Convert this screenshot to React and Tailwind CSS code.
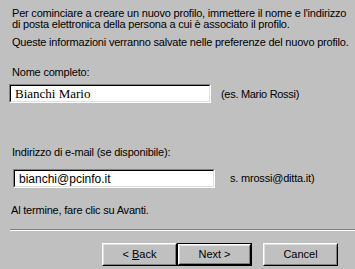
import React from "react";

function Sunken({ className, children }) {
  return (
    <div className={"border border-t-[#808080] border-l-[#808080] border-b-white border-r-white " + className}>
      <div className="h-full border border-t-black border-l-black border-b-[#dfdfdf] border-r-[#dfdfdf] bg-white flex items-center pl-[4px]">
        {children}
      </div>
    </div>
  );
}

function Button({ children, isDefault }) {
  const inner = (
    <div className="w-full h-full border border-t-white border-l-white border-b-black border-r-black">
      <div className="w-full h-full border border-t-[#dfdfdf] border-l-[#dfdfdf] border-b-[#808080] border-r-[#808080] flex items-center justify-center">
        {children}
      </div>
    </div>
  );
  return isDefault ? (
    <div className="w-[75px] h-[23px] border border-black">{inner}</div>
  ) : (
    <div className="w-[75px] h-[23px]">{inner}</div>
  );
}

export default function App() {
  return (
    <div
      className="w-[355px] h-[269px] bg-[#c0c0c0] text-black text-[11px] leading-[11px] overflow-hidden flex flex-col"
      style={{ fontFamily: '"Liberation Sans", Arial, sans-serif' }}
    >
      <div className="pl-[12px] pt-[8px] whitespace-nowrap tracking-[-0.2px]">
        <p>Per cominciare a creare un nuovo profilo, immettere il nome e l'indirizzo<br />di posta elettronica della persona a cui è associato il profilo.</p>
        <p className="mt-[7px]">Queste informazioni verranno salvate nelle preferenze del nuovo profilo.</p>
        <p className="mt-[19px]">Nome completo:</p>
      </div>
      <div className="flex items-center mt-[6px] pl-[9px]">
        <Sunken className="w-[202px] h-[19px]">
          <span className="text-[13px] leading-[15px]" style={{ fontFamily: '"Liberation Serif", "Times New Roman", serif' }}>Bianchi Mario</span>
        </Sunken>
        <span className="ml-[10px] pt-[2px] tracking-[-0.3px]">(es. Mario Rossi)</span>
      </div>
      <div className="pl-[12px] mt-[44px] tracking-[-0.2px]">Indirizzo di e-mail (se disponibile):</div>
      <div className="flex items-center mt-[11px] pl-[13px]">
        <Sunken className="w-[202px] h-[19px]">
          <span className="text-[12px] leading-[14px]">bianchi@pcinfo.it</span>
        </Sunken>
        <span className="ml-[15px] tracking-[-0.2px]">s. mrossi@ditta.it)</span>
      </div>
      <div className="pl-[11px] mt-[17px] tracking-[-0.2px]">Al termine, fare clic su Avanti.</div>
      <div className="ml-[10px] mt-[13px] border-t border-t-[#808080] border-b border-b-white"></div>
      <div className="flex pl-[102px] mt-[12px]">
        <Button>
          <span>&lt; <span className="underline">B</span>ack</span>
        </Button>
        <Button isDefault>
          <span>Next &gt;</span>
        </Button>
        <div className="ml-[11px]">
          <Button>
            <span>Cancel</span>
          </Button>
        </div>
      </div>
    </div>
  );
}
